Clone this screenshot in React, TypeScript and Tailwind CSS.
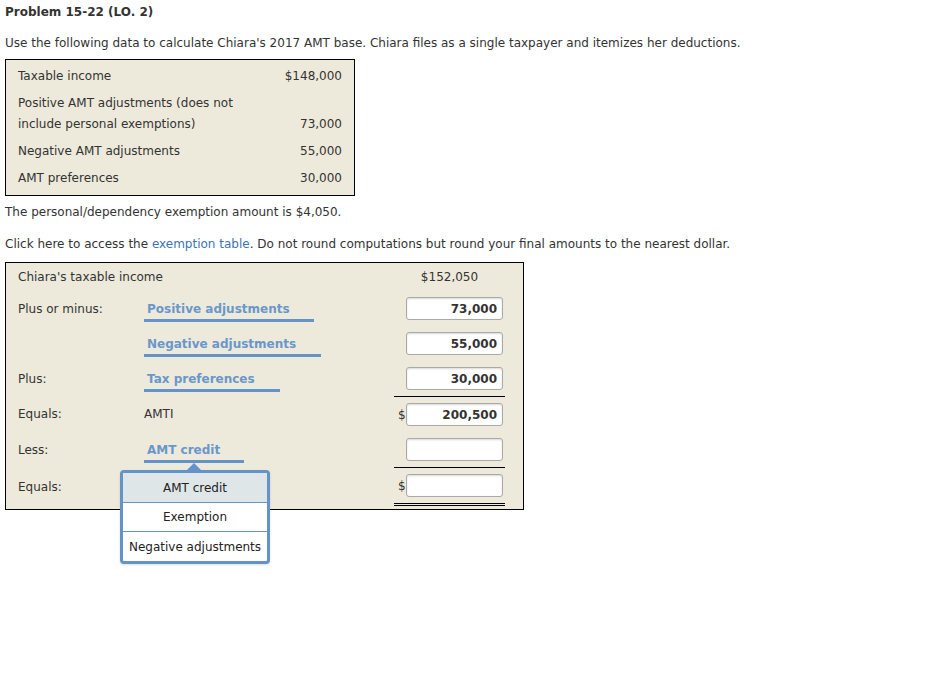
import React from "react";

const font = { fontFamily: '"DejaVu Sans", Verdana, sans-serif' };

function SelectCell({ text, width, open }: { text: string; width: number; open?: boolean }) {
  return (
    <div className="relative h-full flex items-center">
      <div
        className="relative h-[23px] flex items-center border-b-[3px] border-[#6393c8] pl-[3px] font-bold text-[#6a97cb] mt-[4px]"
        style={{ width }}
      >
        {text}
      </div>
      {open && (
        <div className="absolute left-[-24px] top-[38px] z-10 w-[150px]">
          <div className="absolute left-[67px] top-[-7px] w-0 h-0 border-l-[7px] border-r-[7px] border-b-[7px] border-l-transparent border-r-transparent border-b-[#6393c8]" />
          <div className="border-[3px] border-[#6393c8] rounded-[4px] bg-white text-[#222] shadow-sm">
            <div className="h-[30px] flex items-center justify-center bg-[#dfe6e8] border-b border-[#6393c8]">AMT credit</div>
            <div className="h-[29px] flex items-center justify-center border-b border-[#6393c8]">Exemption</div>
            <div className="h-[29px] flex items-center justify-center">Negative adjustments</div>
          </div>
        </div>
      )}
    </div>
  );
}

function Input({ value }: { value?: string }) {
  return (
    <div className="w-[97px] h-[23px] bg-white border border-[#a9a9a9] rounded-[3px] shadow-[inset_0_1px_2px_rgba(0,0,0,0.15)] flex items-center justify-end pr-[5px] font-bold text-[#333]">
      {value}
    </div>
  );
}

function Row({
  label,
  middle,
  right,
  rightClass = "",
  h = 35,
}: {
  label?: string;
  middle?: React.ReactNode;
  right?: React.ReactNode;
  rightClass?: string;
  h?: number;
}) {
  return (
    <div className="flex" style={{ height: h }}>
      <div className="w-[126px] flex items-center">{label}</div>
      <div className="flex-1 flex items-center">{middle}</div>
      <div className={"w-[111px] flex items-center " + rightClass}>{right}</div>
    </div>
  );
}

export default function App() {
  return (
    <div className="w-[949px] h-[683px] bg-white text-[12px] text-[#333] px-[5px] pt-[3px]" style={font}>
      <div className="font-bold text-[12px] leading-[18px] text-[#333]">Problem 15-22 (LO. 2)</div>
      <div className="mt-[13px] leading-[18px]">
        Use the following data to calculate Chiara's 2017 AMT base. Chiara files as a single taxpayer and itemizes her deductions.
      </div>
      <div className="mt-[7px] w-[350px] border border-black bg-[#edeadb] pl-[12px] pr-[12px] pt-[6px] pb-[6px] flex flex-col gap-[6px] leading-[21px]">
        <div className="flex justify-between"><span>Taxable income</span><span>$148,000</span></div>
        <div className="flex justify-between items-end">
          <span>Positive AMT adjustments (does not<br />include personal exemptions)</span>
          <span>73,000</span>
        </div>
        <div className="flex justify-between"><span>Negative AMT adjustments</span><span>55,000</span></div>
        <div className="flex justify-between"><span>AMT preferences</span><span>30,000</span></div>
      </div>
      <div className="mt-[7px] leading-[18px]">The personal/dependency exemption amount is $4,050.</div>
      <div className="mt-[14px] leading-[18px]">
        Click here to access the <span className="text-[#3b73b9]">exemption table</span>. Do not round computations but round your final amounts to the nearest dollar.
      </div>
      <div className="relative mt-[9px] w-[519px] border border-black bg-[#edeadb] pl-[12px] pr-[18px] pb-[3px]">
        <div className="flex h-[28px] items-center">
          <div className="flex-1">Chiara's taxable income</div>
          <div className="w-[111px] text-center">$152,050</div>
        </div>
        <Row label="Plus or minus:" middle={<SelectCell text="Positive adjustments" width={170} />} right={<div className="ml-[12px]"><Input value="73,000" /></div>} />
        <Row middle={<SelectCell text="Negative adjustments" width={177} />} right={<div className="ml-[12px]"><Input value="55,000" /></div>} />
        <Row label="Plus:" middle={<SelectCell text="Tax preferences" width={136} />} right={<div className="ml-[12px]"><Input value="30,000" /></div>} />
        <Row
          label="Equals:"
          middle={<span>AMTI</span>}
          rightClass="border-t border-black"
          h={36}
          right={<><span className="w-[12px] pl-[4px]">$</span><Input value="200,500" /></>}
        />
        <Row label="Less:" middle={<SelectCell text="AMT credit" width={100} open />} right={<div className="ml-[12px]"><Input /></div>} />
        <Row
          label="Equals:"
          h={39}
          rightClass="border-t border-black border-b-[3px] border-b-[#000] border-double"
          right={<><span className="w-[12px] pl-[4px]">$</span><Input /></>}
        />
      </div>
    </div>
  );
}
